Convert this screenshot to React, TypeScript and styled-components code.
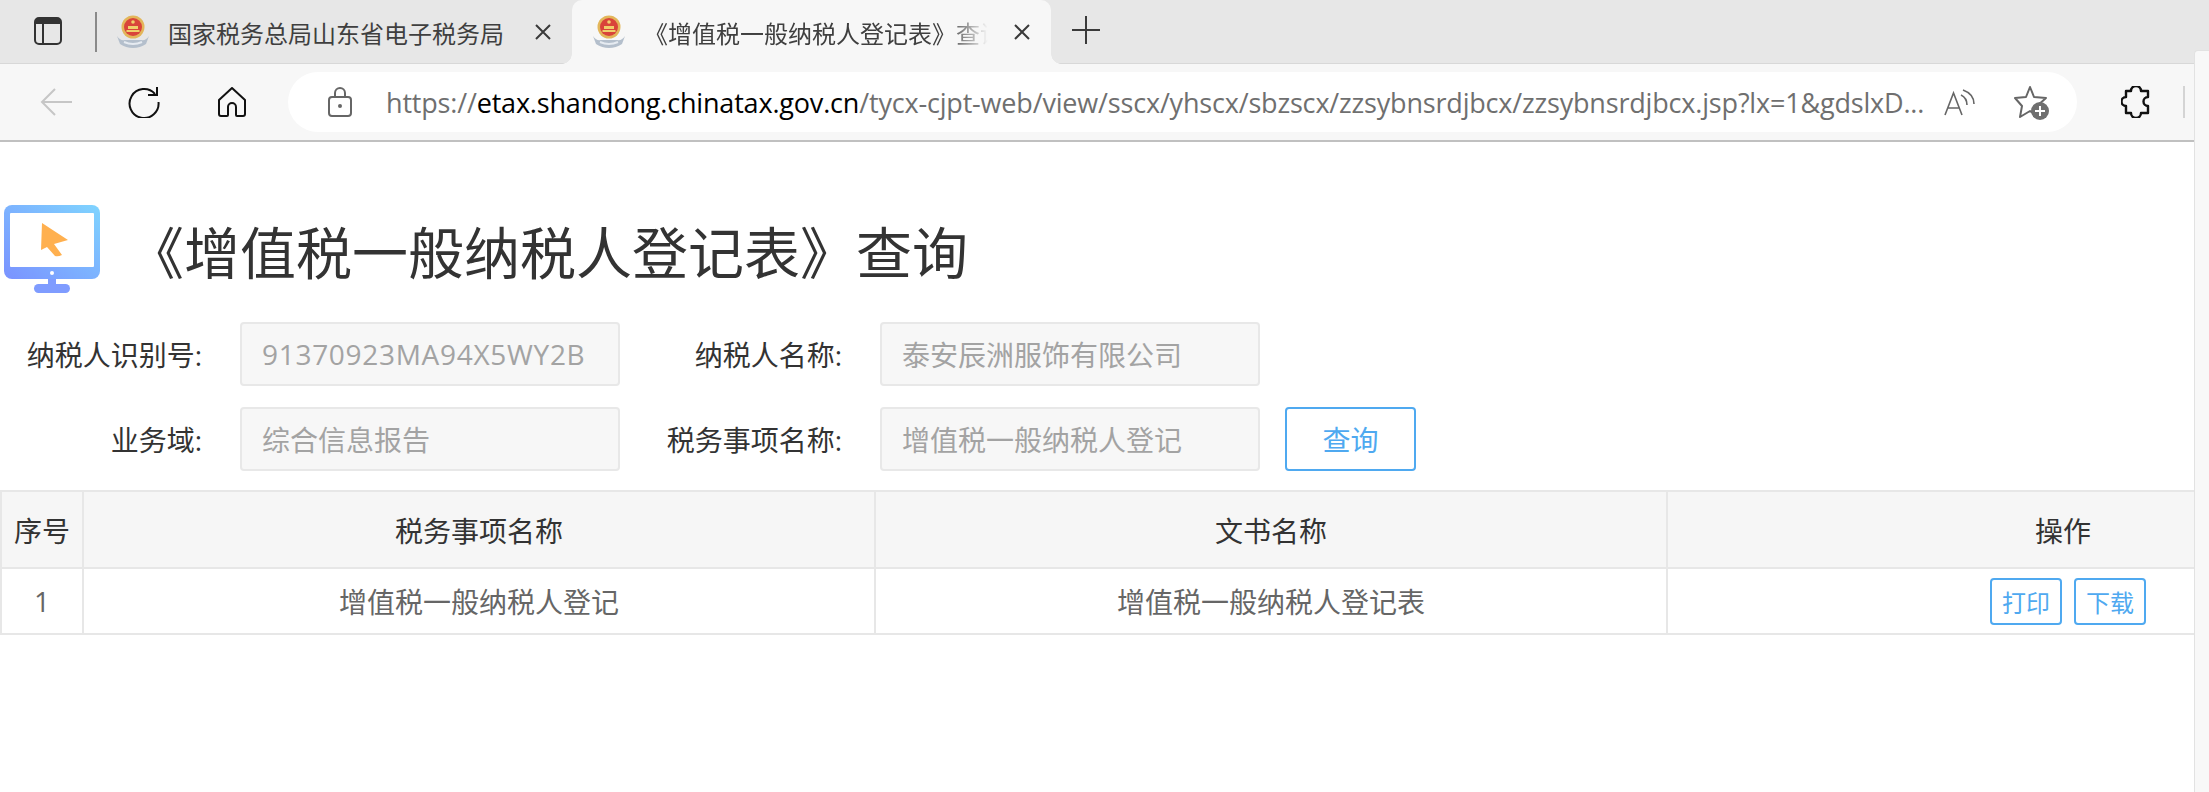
import styled, { createGlobalStyle } from "styled-components";

const GlobalStyle = createGlobalStyle`
    html, body {
        margin: 0;
        padding: 0;
        background: #fff;
        overflow: hidden;
    }
    * {
        box-sizing: border-box;
    }
    body {
        font-family: "Open Sans", "Noto Sans CJK SC", sans-serif;
    }
`

const Window = styled.div`
    position: relative;
    width: 2209px;
    height: 792px;
    overflow: hidden;
    background: #fff;
`

const TabStrip = styled.div`
    height: 64px;
    background: #e7e7e7;
    display: flex;
    align-items: flex-end;
    padding-left: 34px;
    border-bottom: 1px solid #d8d8d8;
`

const TabMenuButton = styled.div`
    width: 28px;
    height: 64px;
    display: flex;
    align-items: center;
    margin-right: 33px;
`

const TabDivider = styled.div`
    width: 2px;
    height: 40px;
    background: #8a8a8a;
    align-self: center;
    margin-right: 19px;
`

const Tab = styled.div<{ $active?: boolean }>`
    position: relative;
    height: 64px;
    margin-bottom: -1px;
    display: flex;
    align-items: center;
    background: ${(p) => (p.$active ? "#f7f7f7" : "transparent")};
    border-radius: ${(p) => (p.$active ? "10px 10px 0 0" : "0")};
    width: ${(p) => (p.$active ? "479px" : "456px")};
    padding-left: ${(p) => (p.$active ? "20px" : "0")};
    margin-right: ${(p) => (p.$active ? "21px" : "0")};
    flex-shrink: 0;

    ${(p) =>
        p.$active
            ? `
        &::before, &::after {
            content: "";
            position: absolute;
            bottom: 0;
            width: 10px;
            height: 10px;
        }
        &::before {
            left: -10px;
            background: radial-gradient(circle at 0 0, transparent 9.5px, #f7f7f7 10px);
        }
        &::after {
            right: -10px;
            background: radial-gradient(circle at 100% 0, transparent 9.5px, #f7f7f7 10px);
        }
    `
            : ""}
`

const TabTitle = styled.span<{ $fade?: boolean }>`
    font-size: 24px;
    color: #3f3f3f;
    white-space: nowrap;
    overflow: hidden;
    margin-left: 18px;
    width: ${(p) => (p.$fade ? "344px" : "335px")};
    ${(p) =>
        p.$fade
            ? "-webkit-mask-image: linear-gradient(to right, #000 88%, transparent 100%); mask-image: linear-gradient(to right, #000 88%, transparent 100%);"
            : ""}
`

const TabClose = styled.div<{ $gap: number }>`
    width: 20px;
    height: 20px;
    margin-left: ${(p) => p.$gap}px;
    flex-shrink: 0;
    display: flex;
`

const NewTab = styled.div`
    width: 30px;
    height: 64px;
    display: flex;
    align-items: center;
    padding-bottom: 2px;
`

const Toolbar = styled.div`
    height: 78px;
    background: #f7f7f7;
    border-bottom: 2px solid #c0c0c0;
    display: flex;
    align-items: center;
    padding-left: 40px;
`

const ToolButton = styled.div<{ $gap: number }>`
    display: flex;
    margin-right: ${(p) => p.$gap}px;
`

const AddressBar = styled.div`
    width: 1789px;
    height: 60px;
    background: #fff;
    border-radius: 30px;
    display: flex;
    align-items: center;
    padding-left: 40px;
    margin-right: 44px;
    flex-shrink: 0;
`

const UrlText = styled.div`
    margin-left: 34px;
    width: 1540px;
    font-size: 27px;
    color: #6f6f6f;
    white-space: nowrap;
    overflow: hidden;
    letter-spacing: -0.18px;
`

const UrlHost = styled.span`
    color: #000;
`

const AddressIcon = styled.div<{ $gap: number }>`
    display: flex;
    margin-left: ${(p) => p.$gap}px;
`

const ToolSeparator = styled.div`
    width: 2px;
    height: 32px;
    background: #d4d4d4;
    margin-left: 32px;
`

const SidePanel = styled.div`
    position: absolute;
    top: 50px;
    right: 0;
    bottom: 0;
    width: 15px;
    background: #f8f8f8;
    border-left: 1px solid #e2e2e2;
    border-top: 1px solid #e2e2e2;
    border-radius: 4px 0 0 0;
`

const Page = styled.div`
    overflow: hidden;
`

const Header = styled.div`
    display: flex;
    align-items: center;
    height: 100px;
    margin-top: 57px;
    padding-left: 4px;
`

const HeaderTitle = styled.h1`
    margin: 0 0 0 28px;
    font-size: 56px;
    font-weight: 400;
    color: #333;
    white-space: nowrap;
    font-family: "Noto Sans CJK SC", sans-serif;
`

const Form = styled.div`
    margin-top: 23px;
    display: flex;
    flex-direction: column;
    gap: 21px;
`

const FormRow = styled.div`
    display: flex;
    align-items: center;
    height: 64px;
`

const FieldLabel = styled.label<{ $width: number }>`
    width: ${(p) => p.$width}px;
    padding-right: 38px;
    text-align: right;
    font-size: 28px;
    color: #333;
    white-space: nowrap;
    flex-shrink: 0;
`

const FieldValue = styled.div`
    width: 380px;
    height: 64px;
    background: #f7f7f7;
    border: 2px solid #e8e8e8;
    border-radius: 4px;
    padding-left: 20px;
    display: flex;
    align-items: center;
    font-size: 28px;
    color: #a3a3a3;
    white-space: nowrap;
    flex-shrink: 0;
`

const TaxId = styled.span`
    letter-spacing: 0.7px;
`

const QueryButton = styled.button`
    width: 131px;
    height: 64px;
    margin-left: 25px;
    background: #fff;
    border: 2px solid #4fa9f0;
    border-radius: 4px;
    color: #4fa9f0;
    font-size: 28px;
    font-family: inherit;
    padding: 0;
`

const Table = styled.table`
    margin-top: 19px;
    width: 2458px;
    border-collapse: collapse;
    table-layout: fixed;
`

const HeadCell = styled.th<{ $width: number }>`
    width: ${(p) => p.$width}px;
    height: 77px;
    background: #f6f6f6;
    border: 2px solid #e7e7e7;
    font-size: 28px;
    font-weight: 400;
    color: #333;
    padding: 0;
`

const BodyCell = styled.td`
    height: 66px;
    border: 2px solid #e7e7e7;
    font-size: 28px;
    color: #666;
    text-align: center;
    padding: 0;
`

const Actions = styled.div`
    display: flex;
    justify-content: center;
    gap: 12px;
    padding-left: 10px;
`

const ActionButton = styled.button`
    width: 72px;
    height: 47px;
    background: #fff;
    border: 2px solid #4fa9f0;
    border-radius: 4px;
    color: #4fa9f0;
    font-size: 24px;
    font-family: inherit;
    padding: 0;
`

// tax bureau emblem used as the favicon
const Emblem = () => (
    <svg width="34" height="34" viewBox="0 0 34 34" style={{ flexShrink: 0 }}>
        <path d="M1 21 Q4 26 9 25 L25 25 Q30 26 33 21 L30 29 Q24 33 17 33 Q10 33 4 29 Z" fill="#b4bfcc" />
        <path d="M8 27 Q17 31 26 27" stroke="#e6ebf1" strokeWidth="2" fill="none" />
        <circle cx="17" cy="12" r="11.5" fill="#e3b65a" />
        <circle cx="17" cy="12" r="9" fill="#d9443a" />
        <circle cx="17" cy="7" r="1.8" fill="#f0cf6a" />
        <rect x="12" y="11" width="10" height="3" fill="#f0cf6a" />
        <rect x="10.5" y="15" width="13" height="2" fill="#f0cf6a" />
    </svg>
)

const CloseIcon = () => (
    <svg width="20" height="20" viewBox="0 0 20 20">
        <path d="M3 3 L17 17 M17 3 L3 17" stroke="#3a3a3a" strokeWidth="2" fill="none" />
    </svg>
)

const MonitorIcon = () => (
    <svg width="96" height="88" viewBox="0 0 96 88">
        <defs>
            <linearGradient id="monitorGrad" x1="1" y1="0" x2="0" y2="1">
                <stop offset="0" stopColor="#7fd4ff" />
                <stop offset="1" stopColor="#7a92ff" />
            </linearGradient>
        </defs>
        <rect x="0" y="0" width="96" height="74" rx="8" fill="url(#monitorGrad)" />
        <rect x="6" y="8" width="84" height="54" rx="1" fill="#fff" />
        <circle cx="48" cy="68" r="2" fill="#fff" />
        <rect x="44" y="74" width="8" height="6" fill="#7f9cff" />
        <rect x="30" y="79" width="36" height="9" rx="4.5" fill="#7f9cff" />
        <path d="M38 18 L64 35 L50 39 L58 50 Q54 52 51 51 L43 42 L37 45 Z" fill="#ffb04f" />
    </svg>
)

export default function App() {
    return (
        <Window>
            <GlobalStyle />
            <TabStrip>
                <TabMenuButton>
                    <svg width="28" height="28" viewBox="0 0 28 28">
                        <rect x="1" y="1" width="26" height="26" rx="4" fill="none" stroke="#333" strokeWidth="2" />
                        <path d="M1 5 a4 4 0 0 1 4 -4 H23 a4 4 0 0 1 4 4 V7 H1 Z" fill="#333" />
                        <path d="M9 7 V27" stroke="#333" strokeWidth="2" />
                    </svg>
                </TabMenuButton>
                <TabDivider />
                <Tab>
                    <Emblem />
                    <TabTitle>国家税务总局山东省电子税务局</TabTitle>
                    <TabClose $gap={30}><CloseIcon /></TabClose>
                </Tab>
                <Tab $active>
                    <Emblem />
                    <TabTitle $fade>《增值税一般纳税人登记表》查询</TabTitle>
                    <TabClose $gap={24}><CloseIcon /></TabClose>
                </Tab>
                <NewTab>
                    <svg width="28" height="28" viewBox="0 0 28 28">
                        <path d="M14 0 V28 M0 14 H28" stroke="#3a3a3a" strokeWidth="2" />
                    </svg>
                </NewTab>
            </TabStrip>
            <Toolbar>
                <ToolButton $gap={56}>
                    <svg width="32" height="28" viewBox="0 0 32 28">
                        <path d="M15 1 L2 14 L15 27 M2 14 H32" stroke="#c6c6c6" strokeWidth="2" fill="none" />
                    </svg>
                </ToolButton>
                <ToolButton $gap={58}>
                    <svg width="32" height="32" viewBox="0 0 32 32">
                        <path d="M27 8 A14.5 14.5 0 1 0 30.5 16" stroke="#111" strokeWidth="2" fill="none" />
                        <path d="M29 1 V9 H20" stroke="#111" strokeWidth="2" fill="none" />
                    </svg>
                </ToolButton>
                <ToolButton $gap={42}>
                    <svg width="28" height="30" viewBox="0 0 28 30">
                        <path d="M14 1 L1 13 V27 a2 2 0 0 0 2 2 H9 a1 1 0 0 0 1 -1 V20 a4 4 0 0 1 8 0 V28 a1 1 0 0 0 1 1 H25 a2 2 0 0 0 2 -2 V13 Z" stroke="#111" strokeWidth="2" fill="none" strokeLinejoin="round" />
                    </svg>
                </ToolButton>
                <AddressBar>
                    <svg width="24" height="30" viewBox="0 0 24 30">
                        <rect x="1" y="10" width="22" height="19" rx="3" fill="none" stroke="#666" strokeWidth="2" />
                        <path d="M7 10 V6 a5 5 0 0 1 10 0 V10" fill="none" stroke="#666" strokeWidth="2" />
                        <circle cx="12" cy="19" r="2" fill="#666" />
                    </svg>
                    <UrlText>
                        https://<UrlHost>etax.shandong.chinatax.gov.cn</UrlHost>/tycx-cjpt-web/view/sscx/yhscx/sbzscx/zzsybnsrdjbcx/zzsybnsrdjbcx.jsp?lx=1&amp;gdslxD...
                    </UrlText>
                    <AddressIcon $gap={18}>
                        <svg width="32" height="30" viewBox="0 0 32 30">
                            <path d="M1 28 L9.5 6 L18 28 M4 21 H15" stroke="#666" strokeWidth="1.6" fill="none" />
                            <path d="M17 8 Q23 11 23 18 M19 3 Q30 7 30 17" stroke="#666" strokeWidth="1.6" fill="none" />
                        </svg>
                    </AddressIcon>
                    <AddressIcon $gap={38}>
                        <svg width="36" height="36" viewBox="0 0 36 36">
                            <path d="M16 3 L20 13 L32 14 L23 22 L25 33 L16 27 L6 33 L8 22 L1 14 L12 13 Z" stroke="#666" strokeWidth="2" fill="none" strokeLinejoin="round" />
                            <circle cx="26" cy="27" r="9" fill="#6f6f6f" />
                            <path d="M26 22 V32 M21 27 H31" stroke="#fff" strokeWidth="2" />
                        </svg>
                    </AddressIcon>
                </AddressBar>
                <svg width="30" height="32" viewBox="0 0 30 32">
                    <path d="M10 5 a5 5 0 0 1 10 0 H27 V11 a4.5 4.5 0 0 0 0 9 V27 H20 a5 5 0 0 1 -10 0 H5 V20 a4.5 4.5 0 0 1 0 -9 V5 Z" stroke="#111" strokeWidth="2.4" fill="none" strokeLinejoin="round" />
                </svg>
                <ToolSeparator />
            </Toolbar>
            <Page>
                <Header>
                    <MonitorIcon />
                    <HeaderTitle>《增值税一般纳税人登记表》查询</HeaderTitle>
                </Header>
                <Form>
                    <FormRow>
                        <FieldLabel $width={240}>纳税人识别号:</FieldLabel>
                        <FieldValue><TaxId>91370923MA94X5WY2B</TaxId></FieldValue>
                        <FieldLabel $width={260}>纳税人名称:</FieldLabel>
                        <FieldValue>泰安辰洲服饰有限公司</FieldValue>
                    </FormRow>
                    <FormRow>
                        <FieldLabel $width={240}>业务域:</FieldLabel>
                        <FieldValue>综合信息报告</FieldValue>
                        <FieldLabel $width={260}>税务事项名称:</FieldLabel>
                        <FieldValue>增值税一般纳税人登记</FieldValue>
                        <QueryButton>查询</QueryButton>
                    </FormRow>
                </Form>
                <Table>
                    <thead>
                        <tr>
                            <HeadCell $width={82}>序号</HeadCell>
                            <HeadCell $width={792}>税务事项名称</HeadCell>
                            <HeadCell $width={792}>文书名称</HeadCell>
                            <HeadCell $width={792}>操作</HeadCell>
                        </tr>
                    </thead>
                    <tbody>
                        <tr>
                            <BodyCell>1</BodyCell>
                            <BodyCell>增值税一般纳税人登记</BodyCell>
                            <BodyCell>增值税一般纳税人登记表</BodyCell>
                            <BodyCell>
                                <Actions>
                                    <ActionButton>打印</ActionButton>
                                    <ActionButton>下载</ActionButton>
                                </Actions>
                            </BodyCell>
                        </tr>
                    </tbody>
                </Table>
            </Page>
            <SidePanel />
        </Window>
    )
}
